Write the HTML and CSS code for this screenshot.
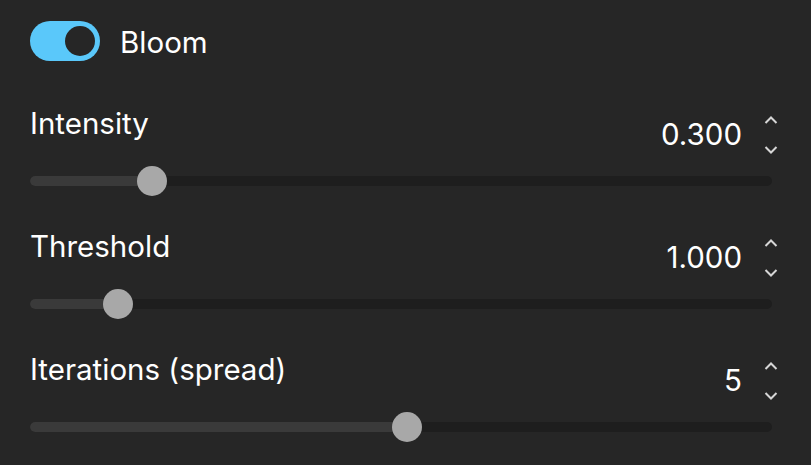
FILE: index.html
```html
<!DOCTYPE html>
<html lang="en">
<head>
<meta charset="UTF-8" />
<meta name="viewport" content="width=device-width, initial-scale=1" />
<title>Bloom</title>
<link rel="stylesheet" href="styles.css">
</head>
<body>
  <div class="panel">
    <div class="toggle-row">
      <span class="toggle on"><span class="knob"></span></span>
      <span class="toggle-label">Bloom</span>
    </div>

    <div class="param">
      <div class="param-head">
        <span class="param-label">Intensity</span>
        <div class="param-value">
          <span class="value">0.300</span>
          <div class="spinner">
            <svg width="14" height="10" viewBox="0 0 14 10"><polyline points="1.5,8 7,2.5 12.5,8" /></svg>
            <svg width="14" height="10" viewBox="0 0 14 10"><polyline points="1.5,2 7,7.5 12.5,2" /></svg>
          </div>
        </div>
      </div>
      <div class="slider">
        <div class="track"><div class="fill" style="width: 16.4%"></div></div>
        <span class="thumb" style="left: 16.4%"></span>
      </div>
    </div>

    <div class="param">
      <div class="param-head">
        <span class="param-label">Threshold</span>
        <div class="param-value">
          <span class="value">1.000</span>
          <div class="spinner">
            <svg width="14" height="10" viewBox="0 0 14 10"><polyline points="1.5,8 7,2.5 12.5,8" /></svg>
            <svg width="14" height="10" viewBox="0 0 14 10"><polyline points="1.5,2 7,7.5 12.5,2" /></svg>
          </div>
        </div>
      </div>
      <div class="slider">
        <div class="track"><div class="fill" style="width: 11.86%"></div></div>
        <span class="thumb" style="left: 11.86%"></span>
      </div>
    </div>

    <div class="param">
      <div class="param-head">
        <span class="param-label">Iterations (spread)</span>
        <div class="param-value">
          <span class="value">5</span>
          <div class="spinner">
            <svg width="14" height="10" viewBox="0 0 14 10"><polyline points="1.5,8 7,2.5 12.5,8" /></svg>
            <svg width="14" height="10" viewBox="0 0 14 10"><polyline points="1.5,2 7,7.5 12.5,2" /></svg>
          </div>
        </div>
      </div>
      <div class="slider">
        <div class="track"><div class="fill" style="width: 50.8%"></div></div>
        <span class="thumb" style="left: 50.8%"></span>
      </div>
    </div>
  </div>
</body>
</html>
```

FILE: styles.css
```css
html, body {
  margin: 0;
  background: #262626;
}

body {
  font-family: Inter, "Noto Sans", sans-serif;
  font-size: 29.5px;
  color: #fff;
}

.panel {
  padding: 21px 33px 0 30px;
}

/* Interruptor Bloom */
.toggle-row {
  display: flex;
  align-items: center;
  gap: 20px;
  height: 40px;
}

.toggle {
  display: flex;
  align-items: center;
  justify-content: flex-end;
  box-sizing: border-box;
  width: 70px;
  height: 40px;
  padding: 0 5px;
  border-radius: 20px;
  background: #5ac8fa;
}

.knob {
  width: 30px;
  height: 30px;
  border-radius: 50%;
  background: #262626;
}

.toggle-label {
  line-height: 34px;
  margin-top: 2px;
}

/* Parametros */
.param {
  margin-top: 31px;
}

.toggle-row + .param {
  margin-top: 43px;
}

.param-head {
  display: flex;
  justify-content: space-between;
  align-items: flex-start;
}

.param-label {
  line-height: 34px;
  padding-top: 2px;
}

.param-value {
  display: flex;
  align-items: center;
  gap: 22px;
  margin-top: 11px;
}

.value {
  line-height: 34px;
  margin-top: -2px;
}

.spinner {
  display: flex;
  flex-direction: column;
  gap: 20px;
}

.spinner svg {
  display: block;
}

.spinner polyline {
  fill: none;
  stroke: #d6d6d6;
  stroke-width: 2;
}

.slider {
  position: relative;
  height: 30px;
  margin: 11px 6px 0 0;
  display: flex;
  align-items: center;
}

.track {
  width: 100%;
  height: 10px;
  border-radius: 5px;
  background: #1e1e1e;
  overflow: hidden;
}

.fill {
  height: 100%;
  background: #3a3a3a;
}

.thumb {
  position: absolute;
  top: 0;
  width: 30px;
  height: 30px;
  margin-left: -15px;
  border-radius: 50%;
  background: #a8a8a8;
}
```
